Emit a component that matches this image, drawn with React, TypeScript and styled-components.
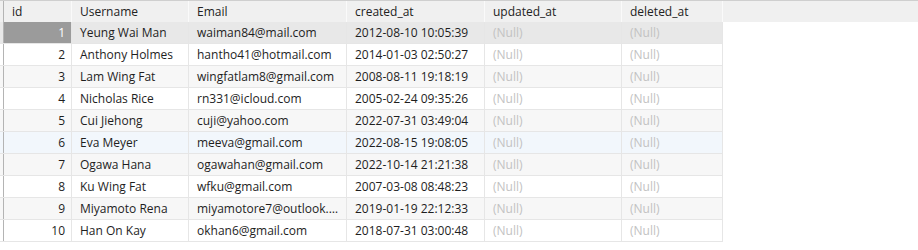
import styled, { createGlobalStyle } from 'styled-components'

const GlobalStyle = createGlobalStyle`
  html, body {
    margin: 0;
    padding: 0;
    background: #ffffff;
  }
  body {
    font-family: "Open Sans", "Noto Sans", "Liberation Sans", sans-serif;
    font-size: 12px;
    color: #1e1e1e;
  }
`

type Variant = 'plain' | 'alt' | 'selected' | 'hover'

const rowBg: Record<Variant, string> = {
  plain: '#ffffff',
  alt: '#f7f7f7',
  selected: '#e8e8e8',
  hover: '#f2f7fc',
}

const Grid = styled.div`
  width: 918px;
  height: 250px;
  overflow: hidden;
  display: flex;
  flex-direction: column;
`

const HeaderRow = styled.div`
  display: flex;
  height: 21px;
  background: #f0f0f0;
  border-top: 1px solid #cfcfcf;
`

const Row = styled.div<{ $variant: Variant }>`
  display: flex;
  height: 21px;
  background: ${(p) => rowBg[p.$variant]};
  border-bottom: 1px solid #e6e6e6;
  width: 723px;
`

const Gutter = styled.div`
  width: 4px;
  flex: none;
  box-sizing: border-box;
  border-right: 1px solid #b4b4b4;
`

const HeadCell = styled.div<{ $w: number }>`
  width: ${(p) => p.$w}px;
  flex: none;
  border-right: 1px solid #fafafa;
  padding-left: 8px;
  box-sizing: border-box;
  line-height: 21px;
  white-space: nowrap;
  color: #222;
  &:first-of-type {
    padding-left: 6px;
  }
`

const Cell = styled.div<{ $w: number; $null?: boolean; $num?: boolean }>`
  width: ${(p) => p.$w}px;
  flex: none;
  border-right: 1px solid #e6e6e6;
  padding: 0 7px 0 8px;
  box-sizing: border-box;
  line-height: 21px;
  white-space: nowrap;
  overflow: hidden;
  text-overflow: ellipsis;
  color: ${(p) => (p.$null ? '#c2c2c2' : '#1e1e1e')};
  text-align: ${(p) => (p.$num ? 'right' : 'left')};
  ${(p) => (p.$num ? 'padding-right: 6px;' : '')}
`

const IdCell = styled(Cell)<{ $active: boolean }>`
  background: ${(p) => (p.$active ? '#9b9b9b' : 'transparent')};
  color: ${(p) => (p.$active ? '#ffffff' : '#1e1e1e')};
`

const widths = [68, 117, 158, 138, 137, 101]
const headers = ['id', 'Username', 'Email', 'created_at', 'updated_at', 'deleted_at']

const users = [
  [1, 'Yeung Wai Man', 'waiman84@mail.com', '2012-08-10 10:05:39'],
  [2, 'Anthony Holmes', 'hantho41@hotmail.com', '2014-01-03 02:50:27'],
  [3, 'Lam Wing Fat', 'wingfatlam8@gmail.com', '2008-08-11 19:18:19'],
  [4, 'Nicholas Rice', 'rn331@icloud.com', '2005-02-24 09:35:26'],
  [5, 'Cui Jiehong', 'cuji@yahoo.com', '2022-07-31 03:49:04'],
  [6, 'Eva Meyer', 'meeva@gmail.com', '2022-08-15 19:08:05'],
  [7, 'Ogawa Hana', 'ogawahan@gmail.com', '2022-10-14 21:21:38'],
  [8, 'Ku Wing Fat', 'wfku@gmail.com', '2007-03-08 08:48:23'],
  [9, 'Miyamoto Rena', 'miyamotore7@outlook.com', '2019-01-19 22:12:33'],
  [10, 'Han On Kay', 'okhan6@gmail.com', '2018-07-31 03:00:48'],
] as const

const variantFor = (id: number): Variant => {
  if (id === 1) return 'selected'
  if (id === 6) return 'hover'
  return id % 2 === 1 ? 'alt' : 'plain'
}

const App = () => (
  <>
    <GlobalStyle />
    <Grid>
      <HeaderRow>
        <Gutter />
        {headers.map((h, i) => (
          <HeadCell key={h} $w={i === 0 ? widths[i] - 4 + 4 : widths[i]}>
            {h}
          </HeadCell>
        ))}
      </HeaderRow>
      {users.map(([id, name, email, created]) => (
        <Row key={id} $variant={variantFor(id)}>
          <Gutter />
          <IdCell $w={widths[0]} $num $active={id === 1}>
            {id}
          </IdCell>
          <Cell $w={widths[1]}>{name}</Cell>
          <Cell $w={widths[2]}>{email}</Cell>
          <Cell $w={widths[3]}>{created}</Cell>
          <Cell $w={widths[4]} $null>
            (Null)
          </Cell>
          <Cell $w={widths[5]} $null>
            (Null)
          </Cell>
        </Row>
      ))}
    </Grid>
  </>
)

export default App
